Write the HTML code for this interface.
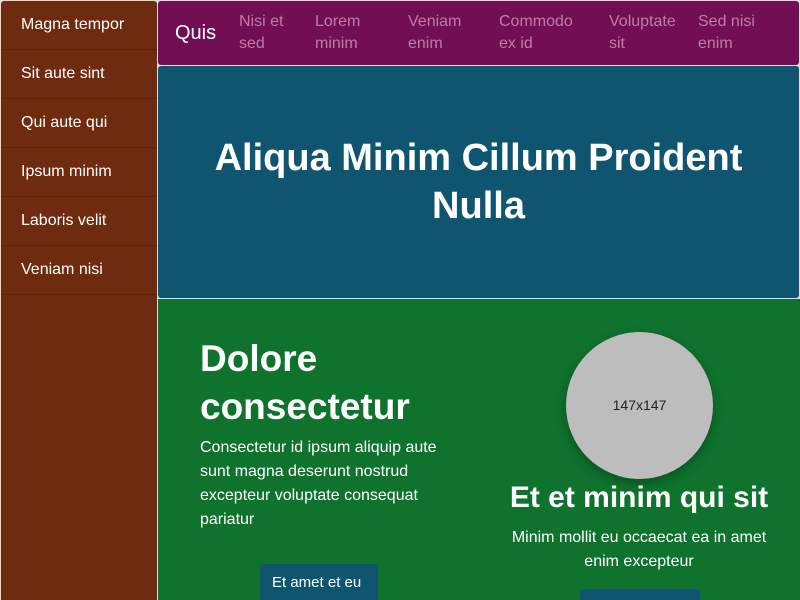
<!DOCTYPE html>
<html style="width:800px;height:600px;overflow:hidden"><head><meta charset="utf-8"><style>
*{margin:0;padding:0;box-sizing:border-box}
body{width:800px;height:600px;overflow:hidden;background:#ddd;font-family:"Liberation Sans",sans-serif;position:relative}
.side{position:absolute;left:1px;top:1px;width:156px;height:599px;background:#6f2b10;border-radius:3px 3px 0 0}
.side div{height:49px;border-bottom:1px solid #5e230b;color:#fff;font-size:16px;padding:15px 0 0 20px}
.nav{position:absolute;left:158px;top:1px;width:641px;height:64px;background:#720f54;border-radius:3px}
.nav span{position:absolute;color:#c07aa8;font-size:16px;line-height:22px}
.hero{position:absolute;left:158px;top:66px;width:641px;height:232px;background:#0f5570;border-radius:3px;color:#fff;font-weight:bold;font-size:38px;text-align:center;line-height:48px;padding-top:68px}
.green{position:absolute;left:158px;top:299px;width:642px;height:301px;background:#0f722d;overflow:hidden}
.btn{position:absolute;background:#0f5570;color:#fff;font-size:15px;border-radius:3px}
</style></head><body>
<div class="side"><div>Magna tempor</div><div>Sit aute sint</div><div>Qui aute qui</div><div>Ipsum minim</div><div>Laboris velit</div><div>Veniam nisi</div></div>
<div class="nav">
<span style="left:17px;top:21px;color:#fff;font-size:20px">Quis</span>
<span style="left:81px;top:10px">Nisi et<br>sed</span>
<span style="left:157px;top:10px">Lorem<br>minim</span>
<span style="left:250px;top:10px">Veniam<br>enim</span>
<span style="left:341px;top:10px">Commodo<br>ex id</span>
<span style="left:451px;top:10px">Voluptate<br>sit</span>
<span style="left:540px;top:10px">Sed nisi<br>enim</span>
</div>
<div class="hero">Aliqua Minim Cillum Proident<br>Nulla</div>
<div class="green">
<div style="position:absolute;left:42px;top:36px;color:#fff;font-weight:bold;font-size:37px;line-height:48px">Dolore<br>consectetur</div>
<div style="position:absolute;left:42px;top:137px;width:260px;color:#fff;font-size:16px;line-height:24px">Consectetur id ipsum aliquip aute sunt magna deserunt nostrud excepteur voluptate consequat pariatur</div>
<div class="btn" style="left:102px;top:265px;width:118px;height:40px;padding:10px 0 0 12px">Et amet et eu</div>
<div style="position:absolute;left:408px;top:33px;width:147px;height:147px;border-radius:50%;background:#bdbdbd;box-shadow:0 4px 10px rgba(0,0,0,.3);font-size:14px;color:#222;text-align:center;line-height:147px">147x147</div>
<div style="position:absolute;left:330px;top:182px;width:302px;text-align:center;color:#fff;font-weight:bold;font-size:30px">Et et minim qui sit</div>
<div style="position:absolute;left:345px;top:227px;width:272px;text-align:center;color:#fff;font-size:16px;line-height:24px">Minim mollit eu occaecat ea in amet enim excepteur</div>
<div class="btn" style="left:422px;top:290px;width:120px;height:30px"></div>
</div>
</body></html>
